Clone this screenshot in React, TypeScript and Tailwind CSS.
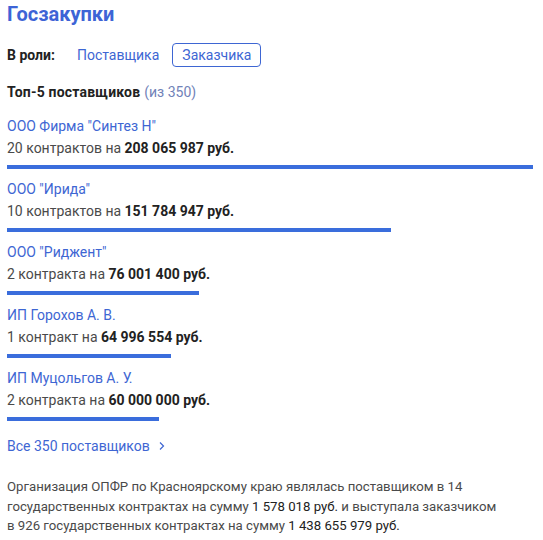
import React from "react";

const items = [
  { name: 'ООО Фирма "Синтез Н"', count: "20 контрактов", sum: "208 065 987 руб.", value: 208065987 },
  { name: 'ООО "Ирида"', count: "10 контрактов", sum: "151 784 947 руб.", value: 151784947 },
  { name: 'ООО "Риджент"', count: "2 контракта", sum: "76 001 400 руб.", value: 76001400 },
  { name: "ИП Горохов А. В.", count: "1 контракт", sum: "64 996 554 руб.", value: 64996554 },
  { name: "ИП Муцольгов А. У.", count: "2 контракта", sum: "60 000 000 руб.", value: 60000000 },
];

export default function App() {
  const max = items[0].value;
  return (
    <div className="w-[543px] h-[540px] bg-white pl-[7px] pr-[10px] text-[14px] text-[#222] font-['Roboto',sans-serif]">
      <h1 className="text-[20px] leading-[28px] font-bold text-[#3d64d6]">Госзакупки</h1>
      <div className="mt-[15px] flex items-center h-[24px]">
        <span className="font-bold text-[#222]">В роли:</span>
        <span className="ml-[22px] text-[#3e66d3]">Поставщика</span>
        <span className="ml-[13px] h-[24px] px-[9px] flex items-center rounded-[4px] border border-[#3e66d3] text-[#3e66d3]">Заказчика</span>
      </div>
      <div className="mt-[15px] h-[20px] flex items-center">
        <span className="font-bold tracking-[0.2px]">Топ-5 поставщиков</span>
        <span className="ml-[4px] text-[#7182b8]">(из 350)</span>
      </div>
      <div className="mt-[13px] flex flex-col">
        {items.map((it) => (
          <div key={it.name} className="h-[63px] flex flex-col">
            <div className="h-[22px] flex items-center text-[#3e66d3]">{it.name}</div>
            <div className="h-[23px] flex items-center text-[#4a4a4a]">
              {it.count} на&nbsp;<b className="font-bold text-[#222]">{it.sum}</b>
            </div>
            <div className="mt-[5px] h-[4px] bg-[#3a6ddc]" style={{ width: `${(it.value / max) * 100}%` }} />
          </div>
        ))}
      </div>
      <div className="mt-[6px] h-[20px] flex items-center text-[#3e66d3]">
        Все 350 поставщиков
        <svg className="ml-[9px]" width="6" height="10" viewBox="0 0 6 10" fill="none">
          <path d="M1 1.5l3.5 3.5-3.5 3.5" stroke="#3e66d3" strokeWidth="1.2" />
        </svg>
      </div>
      <p className="mt-[21px] text-[13.2px] leading-[19.5px] text-[#4a4a4a]">
        Организация ОПФР по Красноярскому краю являлась поставщиком в 14
        <br />
        государственных контрактах на сумму <span className="text-[#222]">1 578 018 руб.</span> и выступала заказчиком
        <br />
        в 926 государственных контрактах на сумму <span className="text-[#222]">1 438 655 979 руб.</span>
      </p>
    </div>
  );
}
